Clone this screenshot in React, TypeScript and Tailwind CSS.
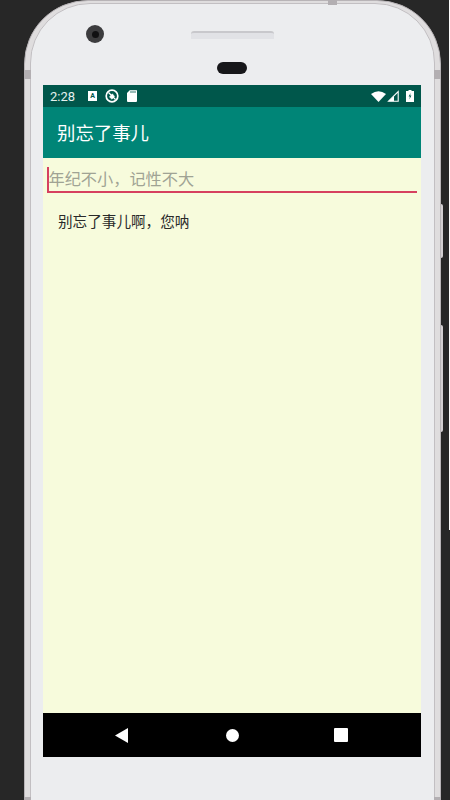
const cjk = "font-['Noto_Sans_CJK_SC','Roboto',sans-serif]";

function StatusBar() {
  return (
    <div className="flex h-[22px] items-center bg-[#00574b] pl-[7px] pr-[7px] text-white">
      <span className="font-['Roboto',sans-serif] text-[13px] leading-none text-[#e4f1ee]">2:28</span>
      <div className="ml-[13px] flex items-center gap-[8px]">
        <div className="flex h-[10px] w-[9px] items-center justify-center bg-white font-['Roboto',sans-serif] text-[7px] font-bold leading-none text-[#00574b]">A</div>
        <svg width="14" height="14" viewBox="0 0 14 14" fill="none" stroke="white">
          <circle cx="7" cy="7" r="5.8" strokeWidth="1.7" />
          <path d="M3.5 3.5 L10.5 10.5" strokeWidth="1.2" />
          <path d="M4.4 8 L7.4 4.8 L9.6 7.4 L7 10.2 Z" fill="white" strokeWidth="0.5" />
        </svg>
        <svg width="10" height="12" viewBox="0 0 10 12" fill="white">
          <path d="M3 0 H9 A1 1 0 0 1 10 1 V11 A1 1 0 0 1 9 12 H1 A1 1 0 0 1 0 11 V3 Z" />
          <path d="M4 .5 V3 M6 .5 V3 M8 .5 V3" stroke="#00574b" strokeWidth="0.8" />
        </svg>
      </div>
      <div className="ml-auto flex items-center">
        <svg width="15" height="11" viewBox="0 0 15 11" fill="white">
          <path d="M0 3 Q7.5 -2.5 15 3 L7.5 11 Z" />
        </svg>
        <svg width="12" height="12" viewBox="0 0 12 12" className="ml-[1px]" fill="none">
          <path d="M11.2 1.5 V11.2 H1.5 Z" stroke="white" strokeWidth="1.1" />
          <path d="M7 6 V11.2 H1.5 Z" fill="white" />
        </svg>
        <svg width="8" height="12" viewBox="0 0 8 12" className="ml-[7px]">
          <path d="M2.5 0 H5.5 V1 H8 V12 H0 V1 H2.5 Z" fill="white" />
          <path d="M4.6 3 L2.6 6.6 H3.9 L3.4 9.4 L5.4 5.6 H4.1 Z" fill="#00574b" />
        </svg>
      </div>
    </div>
  );
}

function NavBar() {
  return (
    <div className="flex h-[44px] items-center bg-black pl-[72px] text-white">
      <svg width="13" height="15" viewBox="0 0 13 15" fill="white">
        <path d="M0 7.5 L13 0 V15 Z" />
      </svg>
      <div className="ml-[98px] h-[13px] w-[13px] rounded-full bg-white" />
      <div className="ml-[95px] h-[14px] w-[14px] rounded-[1px] bg-white" />
    </div>
  );
}

export default function App() {
  return (
    <div className="relative h-[800px] w-[450px] overflow-hidden bg-[#272727] pl-[24px]">
      <div className="absolute right-0 top-0 h-[530px] w-[1px] bg-white" />

      {/* side buttons */}
      <div className="absolute left-[441px] top-[204px] h-[54px] w-[2px] rounded-r-sm bg-[#d2ced1]" />
      <div className="absolute left-[441px] top-[325px] h-[107px] w-[2px] rounded-r-sm bg-[#d2ced1]" />

      <div className="h-[830px] w-[417px] rounded-t-[64px] border-[1px] border-[#b8b4b7] bg-[#dfddde] px-[5px] pt-[2px]">
        <div className="h-full rounded-t-[60px] border-[1px] border-[#c2bfc2] bg-[#ecedef] pl-[12px]">
          <div className="relative h-[81px]">
            <div className="absolute left-[43px] top-[21px] flex h-[18px] w-[18px] items-center justify-center rounded-full bg-[#3c3c3e]">
              <div className="h-[7px] w-[7px] rounded-full bg-[#101012]" />
            </div>
            <div className="absolute left-[148px] top-[27px] h-[8px] w-[83px] rounded-t-[3px] border-t-[2px] border-[#c8c8cc] bg-[#e1e2e6]" />
            <div className="absolute left-[174px] top-[58px] h-[12px] w-[30px] rounded-full bg-[#17171a]" />
          </div>

          <div className="flex h-[672px] w-[378px] flex-col">
            <StatusBar />
            <div className={`flex h-[51px] items-center bg-[#008577] pl-[14px] text-[18.4px] text-white ${cjk}`}>
              别忘了事儿
            </div>
            <div className={`flex-1 bg-[#f7fbdc] ${cjk}`}>
              <div className="mx-[4px] mt-[8px] flex h-[27px] items-center border-b-[2px] border-[#d6405f] text-[16.2px] text-[#a0a394]">
                <div className="h-[24px] w-[1.5px] bg-[#d6405f]" />
                <span className="leading-none">年纪不小，记性不大</span>
              </div>
              <p className="ml-[15px] mt-[21px] text-[14.6px] leading-none text-[#2a2a2a]">别忘了事儿啊，您呐</p>
            </div>
            <NavBar />
          </div>
        </div>
      </div>

      {/* frame ticks */}
      <div className="absolute left-[24px] top-[70px] h-[9px] w-[7px] bg-[#b3afb2]" />
      <div className="absolute left-[434px] top-[70px] h-[9px] w-[7px] bg-[#b3afb2]" />
      <div className="absolute left-[328px] top-0 h-[5px] w-[9px] bg-[#b3afb2]" />
      <div className="absolute bottom-0 left-[24px] h-[3px] w-[7px] bg-[#b3afb2]" />
      <div className="absolute bottom-0 left-[434px] h-[3px] w-[7px] bg-[#b3afb2]" />
    </div>
  );
}
